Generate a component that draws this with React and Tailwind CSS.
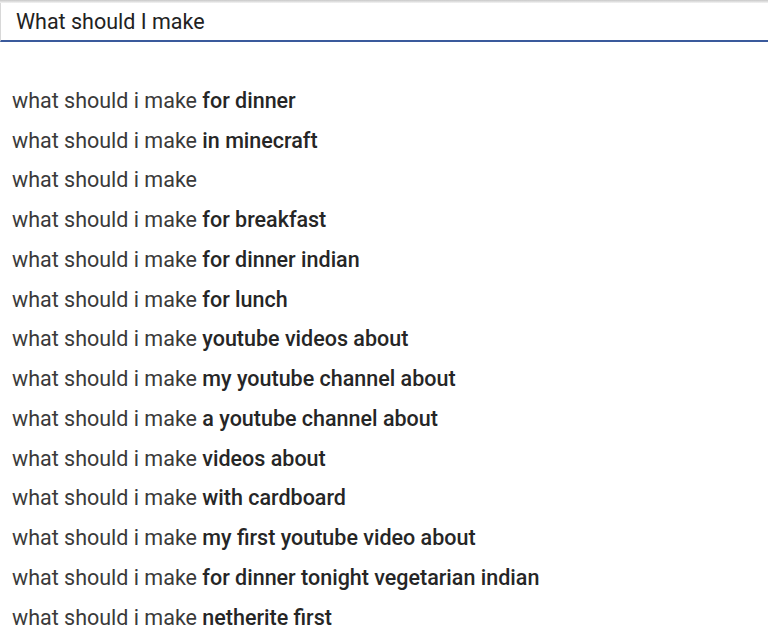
const suggestions = [
  'for dinner',
  'in minecraft',
  '',
  'for breakfast',
  'for dinner indian',
  'for lunch',
  'youtube videos about',
  'my youtube channel about',
  'a youtube channel about',
  'videos about',
  'with cardboard',
  'my first youtube video about',
  'for dinner tonight vegetarian indian',
  'netherite first',
]

export default function App() {
  return (
    <div className="w-[768px] h-[634px] bg-white overflow-hidden font-['Roboto',sans-serif]">
      <div className="h-[3px] bg-gradient-to-b from-[#c8c8c8] to-[#f4f4f4]" />
      <div className="h-[39px] border-l border-[#d8d8d8] border-b-2 border-b-[#3a5a9c] flex items-center pl-[15px] pt-[2px] text-[21.5px] text-[#222]">
        What should I make
      </div>
      <ul className="pt-[39px]">
        {suggestions.map((s, i) => (
          <li key={i} className="h-[39.75px] flex items-center pl-[12px] text-[21.5px] whitespace-pre">
            <span className="text-[#3a3a3a]">what should i make</span>
            {s && <span className="text-[#262626] font-medium"> {s}</span>}
          </li>
        ))}
      </ul>
    </div>
  )
}
